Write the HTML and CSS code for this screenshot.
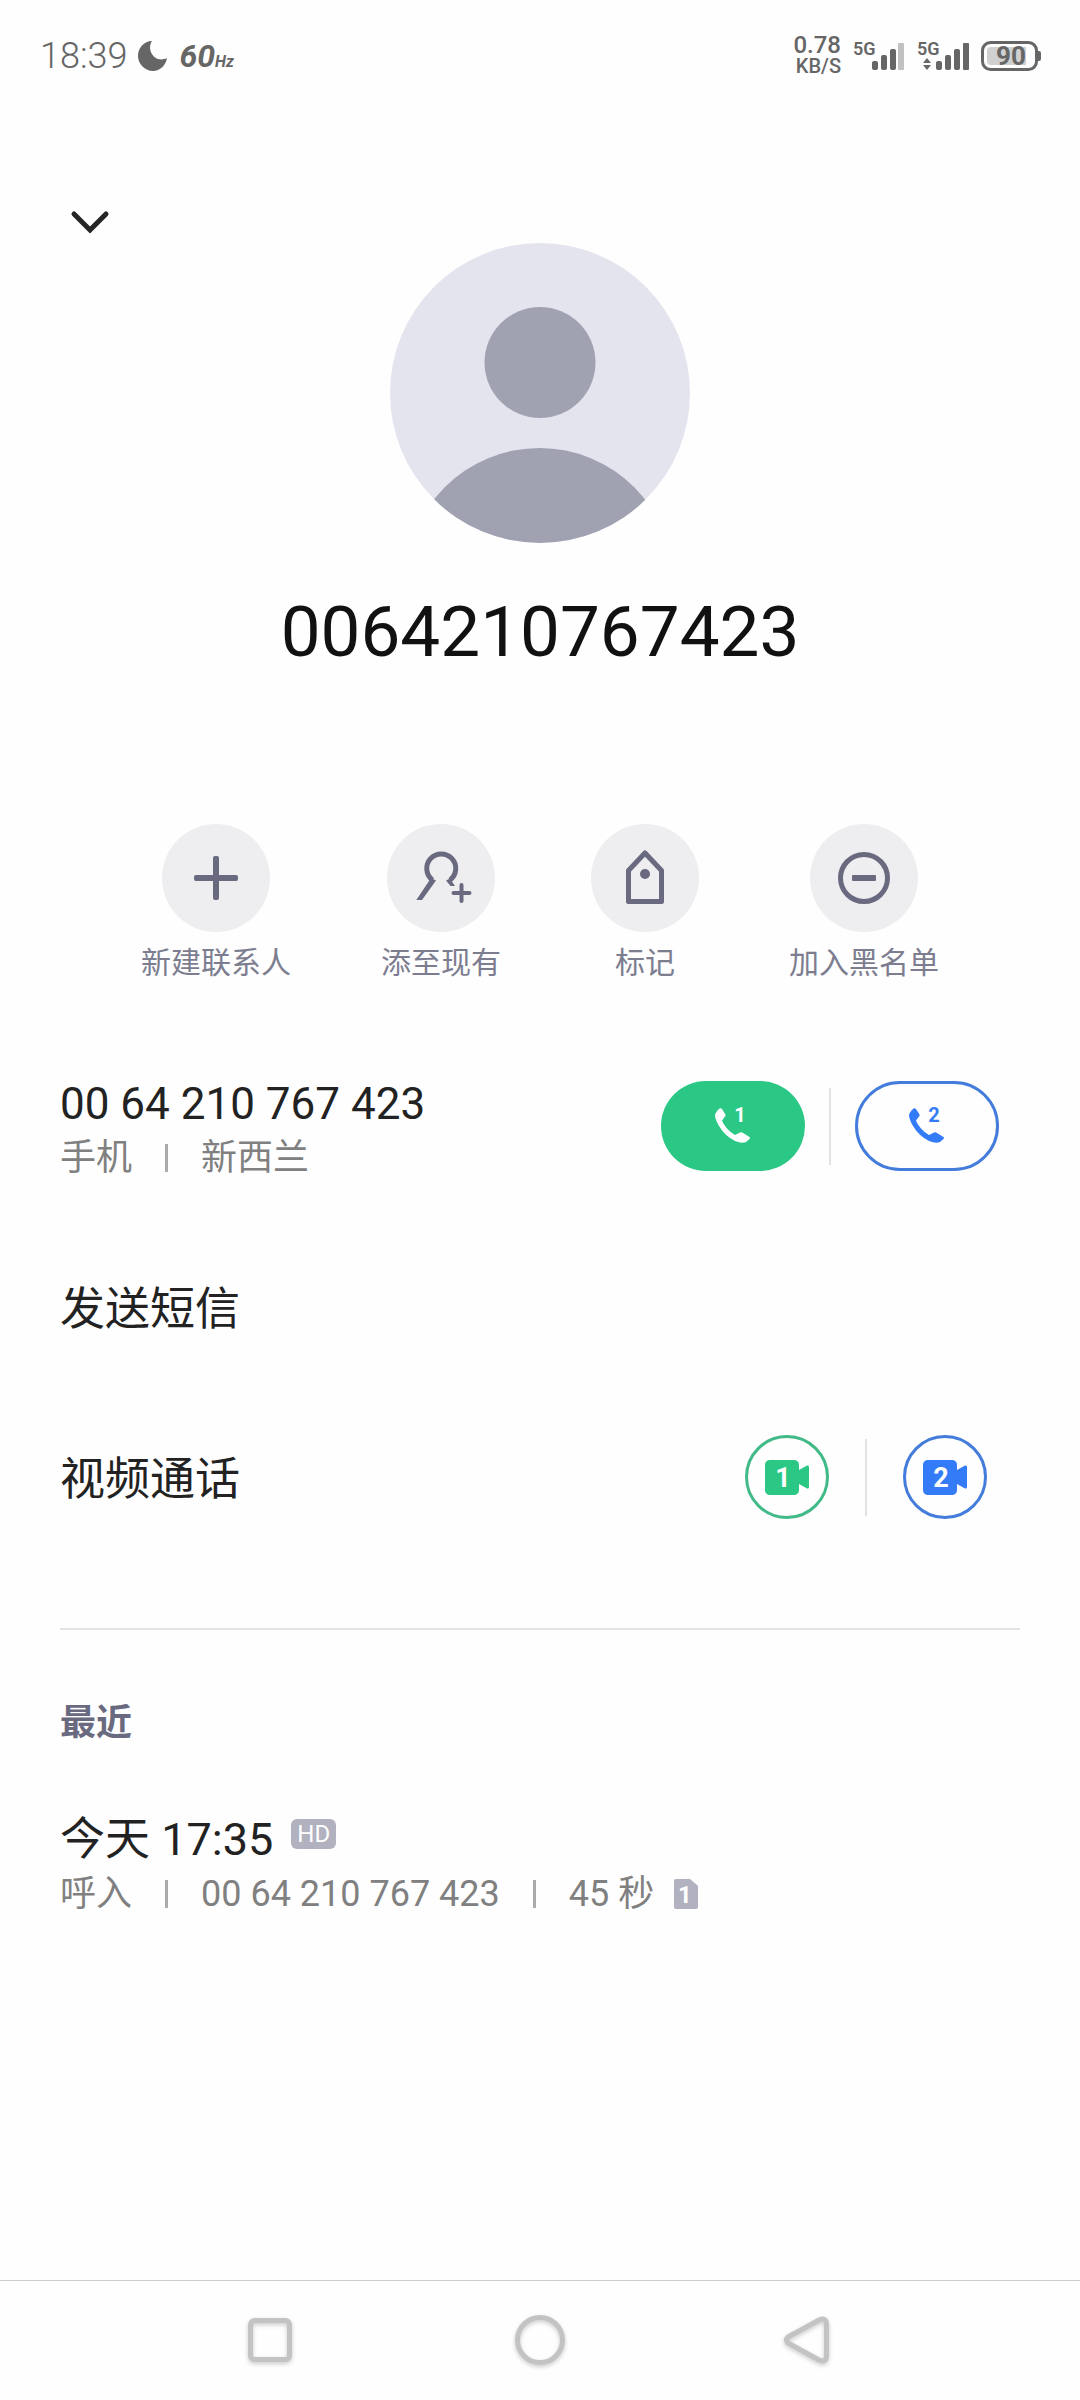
FILE: index.html
```html
<!DOCTYPE html>
<html lang="zh-CN">
<head>
<meta charset="utf-8">
<meta name="viewport" content="width=device-width, initial-scale=1">
<title>0064210767423</title>
<link rel="stylesheet" href="styles.css">
</head>
<body>
<div class="status">
  <div class="status-group">
    <span class="clock">18:39</span>
    <svg class="moon" width="30" height="30" viewBox="0 0 30 30" aria-hidden="true"><path d="M14 0C8 9 17 23 29 17C28 24 22 30 15 30C7 30 0 23 0 15C0 7 6 0 14 0Z"/></svg>
    <span class="rate">60<small>Hz</small></span>
  </div>
  <div class="status-group status-right">
    <div class="speed"><span class="speed-value">0.78</span><span>KB/S</span></div>
    <svg class="signal" width="52" height="30" viewBox="0 0 52 30" role="img" aria-label="5G">
      <text class="net" x="0" y="14">5G</text>
      <rect x="19" y="20" width="6" height="9" rx="2"/><rect x="28" y="14" width="6" height="15" rx="2"/><rect x="37" y="8" width="6" height="21" rx="2"/><rect class="off" x="45" y="2" width="6" height="27" rx="1"/>
    </svg>
    <svg class="signal" width="52" height="30" viewBox="0 0 52 30" role="img" aria-label="5G">
      <text class="net" x="0" y="14">5G</text>
      <path d="M6 22L10 17L14 22ZM6 24L10 29L14 24Z"/>
      <rect x="19" y="20" width="6" height="9" rx="2"/><rect x="28" y="14" width="6" height="15" rx="2"/><rect x="37" y="8" width="6" height="21" rx="2"/><rect x="46" y="2" width="6" height="27" rx="1"/>
    </svg>
    <svg class="battery" width="60" height="30" viewBox="0 0 60 30" role="img" aria-label="90">
      <rect class="shell" x="1.5" y="1.5" width="54" height="27" rx="8"/>
      <path class="charge" d="M10 6H45V24H10Q6 24 6 20V10Q6 6 10 6Z"/>
      <path d="M56 10h2q2 0 2 2v6q0 2-2 2h-2z"/>
      <text x="30" y="24">90</text>
    </svg>
  </div>
</div>

<main class="page">
  <div class="topbar">
    <button class="collapse" type="button" aria-label="收起">
      <svg width="40" height="26" viewBox="0 0 40 26"><path d="M4 4L20 20L36 4"/></svg>
    </button>
  </div>

  <header class="profile">
    <svg class="avatar" width="300" height="300" viewBox="0 0 300 300" aria-hidden="true">
      <defs><clipPath id="disc"><circle cx="150" cy="150" r="150"/></clipPath></defs>
      <circle class="avatar-bg" cx="150" cy="150" r="150"/>
      <g clip-path="url(#disc)"><circle cx="150" cy="119.500" r="55.500"/><circle cx="149.500" cy="339" r="134"/></g>
    </svg>
    <h1>0064210767423</h1>
  </header>

  <nav class="actions">
    <button class="action" type="button">
      <svg width="108" height="108" viewBox="0 0 108 108"><path d="M51 34q0-2 2-2h2q2 0 2 2v17h17q2 0 2 2v2q0 2-2 2H57v17q0 2-2 2h-2q-2 0-2-2V57H34q-2 0-2-2v-2q0-2 2-2h17z"/></svg>
      <span>新建联系人</span>
    </button>
    <button class="action" type="button">
      <svg width="108" height="108" viewBox="0 0 108 108"><path class="line" d="M45.500 56A14.500 14.500 0 1 1 63 56"/><path d="M29.300 76H35L49 56.500L44 54Z"/><path d="M59 56.500L64 54L65 57.500L68 62H63.500Z"/><path class="line plus" d="M74.500 61V77M66.500 69H82.500"/></svg>
      <span>添至现有</span>
    </button>
    <button class="action" type="button">
      <svg width="108" height="108" viewBox="0 0 108 108"><path class="line round" d="M37.500 77.500V46.500L54 29L70.500 46.500V77.500Z"/><circle cx="54" cy="50" r="5"/></svg>
      <span>标记</span>
    </button>
    <button class="action" type="button">
      <svg width="108" height="108" viewBox="0 0 108 108"><circle class="line" cx="54" cy="54" r="23.500"/><rect x="42" y="51" width="24" height="6" rx="1"/></svg>
      <span>加入黑名单</span>
    </button>
  </nav>

  <section class="rows">
    <div class="row row-phone">
      <div class="info">
        <div class="primary number">00 64 210 767 423</div>
        <div class="secondary"><span>手机</span><i class="bar"></i><span>新西兰</span></div>
      </div>
      <div class="calls">
        <button class="call call-one" type="button" aria-label="卡1 拨打">
          <svg width="36" height="36" viewBox="0 0 36 36"><path d="M4.500 .5Q6 0 7 1L10.500 6.500Q11 7.500 10 8.500L7 12.500Q8 16 12 20.500Q16 25 20 27L25 24.500Q26.500 24 28 25L34.500 29Q35.500 30 34.500 31L31 34Q27 36 20 33Q10 28 4 18Q0 11 0 7Q.5 4 4.500 .5Z"/><text x="25" y="14">1</text></svg>
        </button>
        <i class="divider"></i>
        <button class="call call-two" type="button" aria-label="卡2 拨打">
          <svg width="36" height="36" viewBox="0 0 36 36"><path d="M4.500 .5Q6 0 7 1L10.500 6.500Q11 7.500 10 8.500L7 12.500Q8 16 12 20.500Q16 25 20 27L25 24.500Q26.500 24 28 25L34.500 29Q35.500 30 34.500 31L31 34Q27 36 20 33Q10 28 4 18Q0 11 0 7Q.5 4 4.500 .5Z"/><text x="25" y="14">2</text></svg>
        </button>
      </div>
    </div>
    <a class="row row-sms primary" href="#sms">发送短信</a>
    <div class="row row-video">
      <div class="primary">视频通话</div>
      <div class="videos">
        <button class="video video-one" type="button" aria-label="卡1 视频通话">
          <svg width="44" height="35" viewBox="0 0 44 35"><path d="M4 0H30Q34 1 34 5V10L42 5.500Q44 5 44 7V27Q44 29 42 28.500L34 24V30Q34 34 30 35H4Q0 34 0 30V5Q0 1 4 0Z"/><text x="18" y="27">1</text></svg>
        </button>
        <i class="divider"></i>
        <button class="video video-two" type="button" aria-label="卡2 视频通话">
          <svg width="44" height="35" viewBox="0 0 44 35"><path d="M4 0H30Q34 1 34 5V10L42 5.500Q44 5 44 7V27Q44 29 42 28.500L34 24V30Q34 34 30 35H4Q0 34 0 30V5Q0 1 4 0Z"/><text x="18" y="27">2</text></svg>
        </button>
      </div>
    </div>
  </section>

  <section class="recent">
    <h2>最近</h2>
    <div class="primary log-time"><span>今天 17:35</span><span class="hd">HD</span></div>
    <div class="secondary"><span>呼入</span><i class="bar"></i><span>00 64 210 767 423</span><i class="bar"></i><span>45 秒</span>
      <svg class="sim" width="24" height="30" viewBox="0 0 24 30"><path d="M2 0H16L24 7V28Q24 30 22 30H2Q0 30 0 28V2Q0 0 2 0Z"/><text x="11" y="24">1</text></svg>
    </div>
  </section>
</main>

<footer class="sysnav">
  <button type="button" aria-label="最近任务"><svg width="60" height="60" viewBox="0 0 60 60"><rect x="10.500" y="10.500" width="39" height="39" rx="4"/></svg></button>
  <button type="button" aria-label="主屏幕"><svg width="60" height="60" viewBox="0 0 60 60"><circle cx="30" cy="30" r="22.500"/></svg></button>
  <button type="button" aria-label="返回"><svg width="60" height="60" viewBox="0 0 60 60"><path d="M8 27L39 10Q46 7 46.500 14V46Q46 53 39 50L8 33Q5 30 8 27Z"/></svg></button>
</footer>
</body>
</html>
```
FILE: styles.css
```css
* { box-sizing: border-box; }

body {
  margin: 0;
  min-height: 100vh;
  display: flex;
  flex-direction: column;
  background: #fefefe;
  color: #222;
  font-family: Roboto, "Noto Sans CJK SC", sans-serif;
}

button {
  padding: 0;
  border: 0;
  background: none;
  color: inherit;
  font: inherit;
}

svg { display: block; flex: none; overflow: visible; }

/* Status bar */
.status {
  display: flex;
  justify-content: space-between;
  align-items: center;
  height: 112px;
  padding: 0 39px 0 40px;
  color: #666;
}
.status svg { fill: #666; }
.status-group { display: flex; align-items: center; gap: 11px; }
.status-right { gap: 12px; }
.clock { font-size: 36px; font-weight: 300; }
.rate { font-size: 32px; font-weight: 700; font-style: italic; }
.rate small { font-size: 16px; }
.speed {
  display: flex;
  flex-direction: column;
  align-items: flex-end;
  padding-bottom: 2px;
  font-size: 20px;
  line-height: 20px;
  font-weight: 500;
}
.speed-value { font-size: 24px; line-height: 22px; }
.net { font-size: 18px; font-weight: 600; }
.off { opacity: .4; }
.shell { fill: none; stroke: #666; stroke-width: 3; }
.charge { opacity: .3; }
.battery text { font-size: 26px; font-weight: 700; text-anchor: middle; }

/* Profile */
.page { flex: 1; }
.topbar { display: flex; height: 131px; padding: 88px 60px 0; }
.collapse { display: grid; place-items: center; width: 60px; height: 46px; }
.collapse path {
  fill: none;
  stroke: #262626;
  stroke-width: 5;
  stroke-linecap: round;
}
.profile { display: flex; flex-direction: column; align-items: center; }
.avatar { fill: #a1a2b1; }
.avatar-bg { fill: #e4e4ef; }
h1 {
  margin: 47px 0 0;
  color: #111;
  font-size: 71px;
  line-height: 84px;
  font-weight: 400;
}

.actions {
  display: flex;
  justify-content: center;
  gap: 90px;
  margin-top: 150px;
  color: #7d7d90;
  font-size: 30px;
  line-height: 36px;
}
.action { display: flex; flex-direction: column; align-items: center; gap: 13px; }
.action svg { border-radius: 50%; background: #eeeef0; fill: #69697f; }
.action .line { fill: none; stroke: #69697f; stroke-width: 5; }
.action .plus { stroke-width: 4; stroke-linecap: round; }
.action .round { stroke-linejoin: round; }

/* Contact rows */
.rows { margin: 0 60px; border-bottom: 2px solid #e3e3e5; }
.row {
  display: flex;
  justify-content: space-between;
  align-items: center;
}
.row-phone { height: 156px; margin-top: 67px; padding-right: 21px; }
.info { padding-top: 10px; }
.row-sms { height: 164px; margin-top: 24px; }
.row-video { height: 170px; margin-bottom: 66px; padding-right: 33px; }
.row-video .primary { padding-top: 6px; }
.primary {
  color: #222;
  font-size: 45px;
  line-height: 54px;
  text-decoration: none;
}
.number { font-size: 44px; }
.secondary {
  display: flex;
  align-items: center;
  height: 54px;
  color: #808080;
  font-size: 36px;
  line-height: 54px;
}
.bar { width: 3px; height: 28px; margin: 0 33px; background: #aaa; }
.calls, .videos { display: flex; align-items: center; }
.calls { gap: 24px; }
.videos { gap: 36px; }
.divider { width: 2px; height: 77px; background: #e2e2e2; }
.call {
  display: grid;
  place-items: center;
  width: 144px;
  height: 90px;
  border-radius: 45px;
}
.call-one { background: #2bc785; fill: #fff; }
.call-two { border: 3px solid #447cdb; fill: #347cf7; }
.call text { font-size: 20px; font-weight: 700; text-anchor: middle; }
.video {
  display: grid;
  place-items: center;
  width: 84px;
  height: 84px;
  border: 3px solid;
  border-radius: 50%;
}
.video-one { border-color: #42ba88; fill: #2bc785; }
.video-two { border-color: #447cdb; fill: #347cf7; }
.video text { fill: #fff; font-size: 27px; font-weight: 700; text-anchor: middle; }

/* Recent calls */
.recent { padding: 66px 60px 0; }
h2 {
  margin: 0 0 63px;
  color: #69697f;
  font-size: 36px;
  line-height: 54px;
  font-weight: 700;
}
.log-time { display: flex; align-items: center; gap: 18px; }
.hd {
  width: 45px;
  height: 30px;
  margin-bottom: 12px;
  border-radius: 6px;
  background: #b1b1bf;
  color: #fff;
  font-size: 24px;
  line-height: 30px;
  text-align: center;
}
.sim { margin-left: 20px; fill: #b1b1bf; }
.sim text { fill: #fff; font-size: 24px; font-weight: 700; text-anchor: middle; }

/* System navigation */
.sysnav {
  display: grid;
  grid-template-columns: repeat(3, 1fr);
  align-items: center;
  height: 120px;
  padding: 0 135px 2px;
  border-top: 1px solid #ccc;
}
.sysnav button { display: grid; place-items: center; }
.sysnav svg {
  fill: none;
  stroke: #c3c3c3;
  stroke-width: 5;
  filter: drop-shadow(0 2px 2px rgba(0, 0, 0, .2));
}
```
